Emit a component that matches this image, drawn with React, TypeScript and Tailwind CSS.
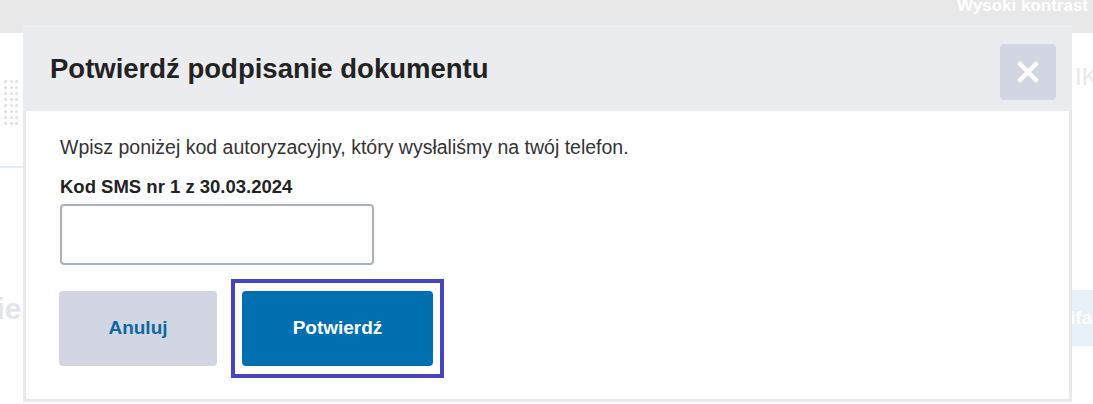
export default function App() {
  return (
    <div
      className="relative w-[1093px] h-[404px] overflow-hidden bg-white"
      style={{ fontFamily: '"Liberation Sans", Arial, sans-serif' }}
    >
      {/* page behind the dialog, mostly faded out */}
      <div className="flex flex-col h-full">
        <div className="h-[33px] bg-[#e8e8e9] flex items-start pl-[957px]">
          <span className="text-white font-bold text-[17px] leading-none -mt-[3px] whitespace-nowrap">
            Wysoki kontrast
          </span>
        </div>
        <div className="flex-1 flex justify-between">
          <div className="w-[23px] flex flex-col overflow-hidden">
            <div className="h-[47px]" />
            <div className="grid grid-cols-3 gap-[3px] w-[14px] ml-[4px]">
              {Array.from({ length: 24 }).map((_, i) => (
                <span key={i} className="w-[3px] h-[3px] rounded-full bg-[#dcdfe4]" />
              ))}
            </div>
            <div className="h-[41px]" />
            <div className="h-[2px] bg-[#e3eef7]" />
            <div className="h-[126px]" />
            <div className="text-[30px] font-bold text-[#e2e4e8] leading-none -ml-[22px] whitespace-nowrap">
              nie
            </div>
          </div>
          <div className="w-[21px] flex flex-col overflow-hidden">
            <div className="h-[32px]" />
            <div className="text-[24px] text-[#e8e9ec] leading-none whitespace-nowrap ml-[3px]">IKA</div>
            <div className="h-[201px]" />
            <div className="h-[56px] bg-[#e7f1f8] flex items-center">
              <span className="text-white font-bold text-[19px] -ml-[2px]">ifa</span>
            </div>
          </div>
        </div>
      </div>

      {/* dialog */}
      <div className="absolute left-[23px] top-[25px] w-[1049px] h-[377px] flex flex-col border-[3px] border-t-0 border-[#e9e9eb] bg-white">
        <div className="h-[86px] bg-[#ebecef] flex items-center justify-between pl-[27px] pr-[16px] -mx-[3px]">
          <h1 className="text-[27.5px] font-bold text-[#222] mt-[1px]">Potwierdź podpisanie dokumentu</h1>
          <button className="w-[56px] h-[56px] mt-[8px] rounded-[4px] bg-[#d1d6e2] flex items-center justify-center">
            <svg width="22" height="22" viewBox="0 0 22 22">
              <path d="M3 3 L19 19 M19 3 L3 19" stroke="white" strokeWidth="4.5" strokeLinecap="round" />
            </svg>
          </button>
        </div>
        <div className="flex flex-col pl-[33px] pt-[24px]">
          <p className="text-[19.5px] text-[#333] leading-[24px] ml-[1px]">
            Wpisz poniżej kod autoryzacyjny, który wysłaliśmy na twój telefon.
          </p>
          <label className="mt-[17px] text-[18.5px] font-bold text-[#222] leading-[22px] ml-[1px]">
            Kod SMS nr 1 z 30.03.2024
          </label>
          <input
            className="mt-[6px] ml-[1px] w-[314px] h-[61px] border-2 border-[#aab1c4] rounded-[4px] outline-none"
            type="text"
          />
          <div className="flex items-center mt-[14px] gap-[14px]">
            <button className="w-[158px] h-[75px] rounded-[4px] bg-[#d1d6e2] text-[#0f67a1] font-bold text-[19px]">
              Anuluj
            </button>
            <div className="px-[7px] py-[8px] border-4 border-[#4545c2]">
              <button className="w-[191px] h-[75px] rounded-[4px] bg-[#0070b1] text-white font-bold text-[19px]">
                Potwierdź
              </button>
            </div>
          </div>
        </div>
      </div>
    </div>
  );
}
